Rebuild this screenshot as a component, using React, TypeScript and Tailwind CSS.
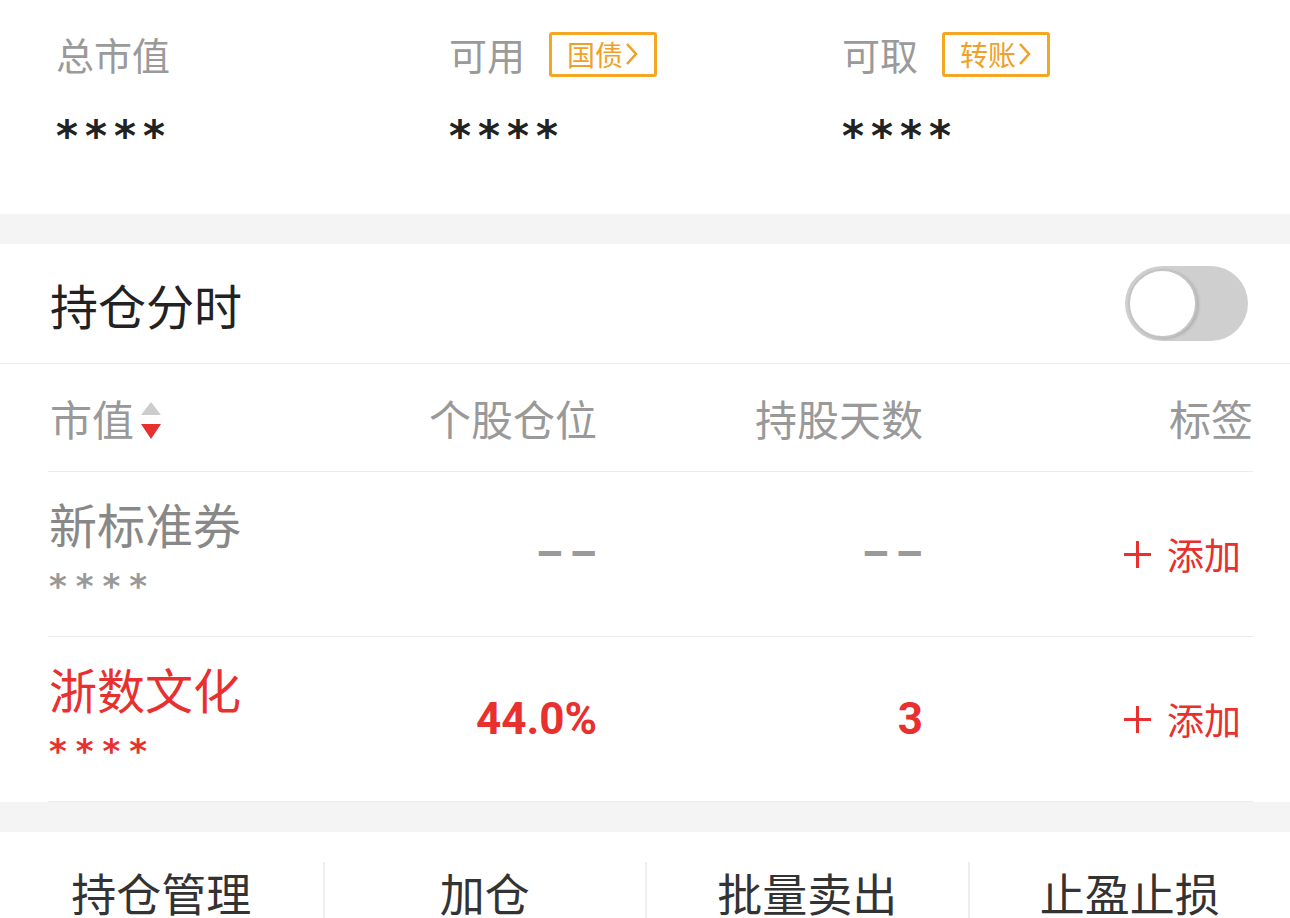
import React from "react"

const cjk = { fontFamily: '"Noto Sans CJK SC", "Noto Sans", sans-serif' }
const num = { fontFamily: 'Roboto, "Noto Sans CJK SC", sans-serif' }
const star = { fontFamily: '"DejaVu Sans", sans-serif' }

function Stars({ className = "" }: { className?: string }) {
  return <div className={className} style={star}>****</div>
}

function Summary() {
  const items = [
    { label: "总市值" },
    { label: "可用", badge: "国债" },
    { label: "可取", badge: "转账" },
  ]
  return (
    <div className="h-[214px] bg-white flex pl-[56px] pt-[30px]">
      {items.map((it) => (
        <div key={it.label} className="w-[393px] flex flex-col">
          <div className="flex items-center h-[48px]">
            <span className="text-[38px] leading-none text-[#9a9a9a]" style={cjk}>{it.label}</span>
            {it.badge && (
              <span className="ml-[24px] h-[45px] w-[108px] border-[3px] border-[#f5a623] rounded-[3px] flex items-center justify-center text-[28px] text-[#f0a028] leading-none" style={cjk}>
                {it.badge}
                <svg width="14" height="24" viewBox="0 0 14 24" className="ml-[2px]"><path d="M2 2 L11 12 L2 22" fill="none" stroke="#f0a028" strokeWidth="2.6" /></svg>
              </span>
            )}
          </div>
          <Stars className="mt-[38px] text-[42px] font-bold leading-none tracking-[7px] text-[#222]" />
        </div>
      ))}
    </div>
  )
}

function Toggle() {
  return (
    <div className="w-[123px] h-[75px] rounded-full bg-[#cfcfcf] relative">
      <div className="absolute left-[3px] top-[3px] w-[69px] h-[69px] rounded-full bg-white border-[2px] border-[#c4c4c4] shadow-[2px_1px_3px_rgba(0,0,0,0.15)]" />
    </div>
  )
}

type Row = { name: string; pct: string; days: string; red?: boolean }

const rows: Row[] = [
  { name: "新标准券", pct: "--", days: "--" },
  { name: "浙数文化", pct: "44.0%", days: "3", red: true },
]

function Cell({ value, red }: { value: string; red?: boolean }) {
  if (value === "--") {
    return <span className="text-[44px] font-bold tracking-[6px] mr-[-6px] text-[#9a9a9a]" style={num}>––</span>
  }
  return <span className={`text-[44px] font-bold ${red ? "text-[#e8302f]" : "text-[#999]"}`} style={num}>{value}</span>
}

function Holdings() {
  return (
    <div className="bg-white">
      <div className="h-[120px] flex items-center justify-between pl-[50px] pr-[42px] border-b border-[#ececec]">
        <span className="text-[48px] text-[#222] leading-none" style={cjk}>持仓分时</span>
        <Toggle />
      </div>
      <div className="ml-[48px] mr-[37px]">
        <div className="h-[108px] flex items-center border-b border-[#ececec] text-[42px] text-[#999] leading-none" style={cjk}>
          <div className="w-[222px] flex items-center pl-[2px]">
            市值
            <svg width="22" height="40" viewBox="0 0 22 40" className="ml-[6px] mt-[8px]">
              <path d="M11 0 L21 13 L1 13 Z" fill="#cccccc" />
              <path d="M1 22 L21 22 L11 37 Z" fill="#e8302f" />
            </svg>
          </div>
          <div className="w-[327px] text-right">个股仓位</div>
          <div className="w-[326px] text-right">持股天数</div>
          <div className="flex-1 text-right">标签</div>
        </div>
        {rows.map((r) => (
          <div key={r.name} className="h-[165px] flex items-center border-b border-[#ececec] leading-none">
            <div className="w-[222px] pl-[1px] -mt-[6px]">
              <div className={`text-[48px] leading-none ${r.red ? "text-[#e8302f]" : "text-[#888]"}`} style={cjk}>{r.name}</div>
              <Stars className={`mt-[22px] text-[34px] font-bold leading-none tracking-[9px] ${r.red ? "text-[#e8302f]" : "text-[#999]"}`} />
            </div>
            <div className="w-[327px] text-right">
              <Cell value={r.pct} red={r.red} />
            </div>
            <div className="w-[326px] text-right">
              <Cell value={r.days} red={r.red} />
            </div>
            <div className="flex-1 flex items-center justify-end pr-[12px] text-[37px] text-[#e8302f] leading-none" style={cjk}>
              <svg width="27" height="27" viewBox="0 0 27 27" className="mr-[16px]"><path d="M13.5 0 V27 M0 13.5 H27" stroke="#e8302f" strokeWidth="3" /></svg>
              添加
            </div>
          </div>
        ))}
      </div>
    </div>
  )
}

function BottomBar() {
  const items = ["持仓管理", "加仓", "批量卖出", "止盈止损"]
  return (
    <div className="bg-white h-[120px] flex pt-[30px]">
      {items.map((t, i) => (
        <div key={t} className={`w-[322.5px] flex justify-center pt-[8px] ${i > 0 ? "border-l-2 border-[#eeeeee]" : ""}`}>
          <span className="text-[45px] text-[#333] leading-none" style={cjk}>{t}</span>
        </div>
      ))}
    </div>
  )
}

export default function App() {
  return (
    <div className="w-[1290px] h-[918px] overflow-hidden bg-[#f4f4f4]">
      <Summary />
      <div className="h-[30px]" />
      <Holdings />
      <div className="h-[30px]" />
      <BottomBar />
    </div>
  )
}
